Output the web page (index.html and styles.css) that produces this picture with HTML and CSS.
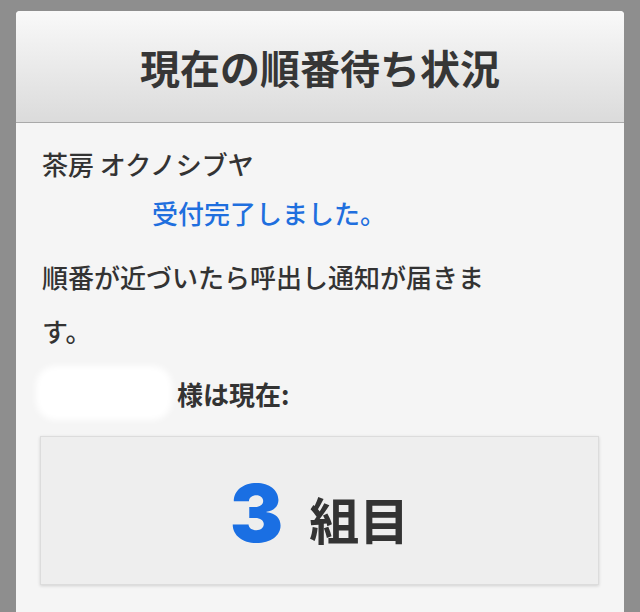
FILE: index.html
```html
<!DOCTYPE html>
<html lang="ja">
<head>
<meta charset="utf-8">
<link rel="stylesheet" href="styles.css">
</head>
<body>
<div class="card">
  <div class="header"><h1 class="title">現在の順番待ち状況</h1></div>
  <div class="content">
    <p class="shop">茶房 オクノシブヤ</p>
    <p class="done">受付完了しました。</p>
    <p class="notice">順番が近づいたら呼出し通知が届きます。</p>
    <div class="who"><span class="mask"></span><span class="who-text">様は現在:</span></div>
    <div class="count"><span class="num">3</span><span class="unit">組目</span></div>
  </div>
</div>
</body>
</html>
```
FILE: styles.css
```css
html, body { margin: 0; padding: 0; }
body {
  background: #8e8e8e;
  font-family: "Noto Sans CJK JP", "Noto Sans", sans-serif;
  color: #333;
  height: 612px;
  overflow: hidden;
}
.card {
  margin: 11px 16px 0;
  background: #f5f5f5;
  border-radius: 4px 4px 0 0;
  height: 601px;
  overflow: hidden;
}
.header {
  height: 111px;
  border-bottom: 1px solid #a9a9a9;
  background: linear-gradient(#f9f9f9, #dbdbdb);
  display: flex;
  align-items: center;
  justify-content: center;
}
.title {
  margin: 0;
  font-size: 40px;
  font-weight: 700;
  color: #363636;
  line-height: 1;
}
.content { padding: 0 26px; }
.shop {
  margin: 23px 0 0;
  font-size: 26px;
  line-height: 36px;
  font-weight: 500;
  color: #333;
}
.done {
  margin: 13px 0 0 110px;
  font-size: 26px;
  line-height: 36px;
  color: #1f6fde;
  font-weight: 500;
}
.notice {
  margin: 19px 0 0;
  font-size: 26px;
  line-height: 54px;
  font-weight: 500;
  color: #333;
  width: 470px;
}
.who {
  display: flex;
  align-items: center;
  margin-top: 6px;
  height: 58px;
}
.mask {
  display: block;
  width: 136px;
  height: 54px;
  margin-left: -6px;
  background: #fff;
  border-radius: 20px;
  filter: blur(3px);
}
.who-text {
  font-size: 26px;
  font-weight: 700;
  margin-left: 5px;
  color: #333;
}
.count {
  margin: 14px 0 0 -2px;
  width: 557px;
  height: 147px;
  background: #eeeeee;
  border: 1px solid #dcdcdc;
  box-shadow: 0 1px 3px rgba(0,0,0,0.15);
  display: flex;
  align-items: center;
  justify-content: center;
}
.num {
  font-family: "Inter", "Roboto", sans-serif;
  font-weight: 900;
  font-size: 80px;
  color: #1a6fe3;
  line-height: 1;
  margin-right: 26px;
  margin-top: 4px;
}
.unit {
  font-size: 50px;
  font-weight: 700;
  color: #333;
  line-height: 1;
  margin-top: 14px;
}
```
